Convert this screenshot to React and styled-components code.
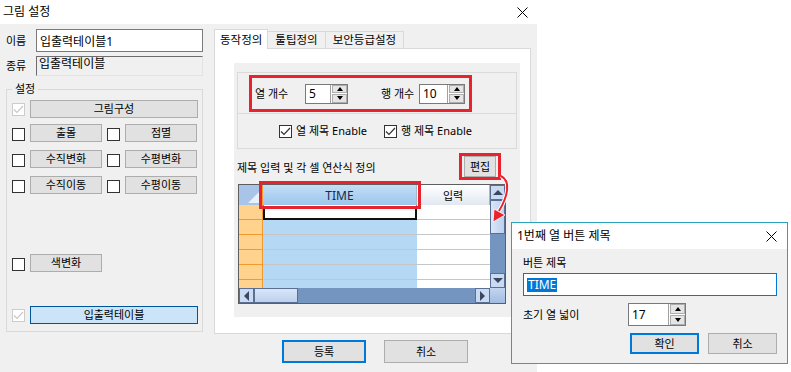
import React from 'react'
import styled, { createGlobalStyle } from 'styled-components'

const GlobalStyle = createGlobalStyle`
  html, body { margin: 0; padding: 0; background: #fff; }
  body {
    font-family: "Noto Sans", "Noto Sans CJK KR", sans-serif;
    font-size: 11px;
    color: #000;
  }
  * { box-sizing: border-box; }
`

const Screen = styled.div`
  position: relative;
  width: 791px;
  height: 372px;
  overflow: hidden;
  background: #fff;
`

const Window = styled.div`
  width: 537px;
  height: 372px;
  background: #f0f0f0;
  display: flex;
  flex-direction: column;
`

const TitleBar = styled.div`
  height: ${p => p.$h || 24}px;
  flex: none;
  background: #fff;
  display: flex;
  align-items: center;
  justify-content: space-between;
  padding: 0 ${p => p.$pr || 9}px 0 ${p => p.$pl || 3}px;
  font-size: 12px;
  line-height: 14px;
`

const Body = styled.div`
  display: flex;
  gap: 11px;
  padding: 5px 6px 0;
`

const LeftCol = styled.div`
  width: 197px;
  display: flex;
  flex-direction: column;
`

const FieldRow = styled.div`
  display: flex;
  align-items: center;
  margin-top: ${p => p.$mt || 0}px;
`

const FieldLabel = styled.span`
  width: 30px;
  line-height: 14px;
`

const NameInput = styled.div`
  width: 167px;
  height: 23px;
  background: #fff;
  border: 1px solid #7a7a7a;
  padding: 0 3px;
  display: flex;
  align-items: center;
  font-size: 12px;
`

const KindInput = styled.div`
  width: 167px;
  height: 20px;
  background: #f0f0f0;
  border: 1px solid #e3e3e3;
  border-top-color: #6d6d6d;
  border-left-color: #6d6d6d;
  padding: 0 2px;
  font-size: 12px;
  line-height: 14px;
`

const Group = styled.fieldset`
  margin: 6px 0 0;
  padding: 4px 5px 0;
  height: 250px;
  border: 1px solid #d9d9d9;
  min-width: 0;
`

const Legend = styled.legend`
  padding: 0 3px;
  line-height: 14px;
  margin-left: 0;
`

const ToolRow = styled.div`
  display: grid;
  grid-template-columns: ${p => (p.$pair ? '13px 72px 13px 72px' : '13px 168px')};
  column-gap: 5px;
  align-items: center;
  height: 18px;
  margin-top: ${p => p.$mt || 0}px;
`

const CheckBox = styled.span`
  display: inline-flex;
  align-items: center;
  justify-content: center;
  width: 13px;
  height: 13px;
  flex: none;
  background: #fff;
  border: 1px solid ${p => (p.$disabled ? '#cccccc' : '#333')};
  margin-top: ${p => p.$mt || 0}px;
`

const Btn = styled.button`
  font: inherit;
  font-size: 11px;
  color: #000;
  height: ${p => p.$h || 18}px;
  width: ${p => (p.$w ? p.$w + 'px' : '100%')};
  padding: 0;
  line-height: 14px;
  background: ${p => (p.$active ? '#cce4f7' : '#e1e1e1')};
  border: ${p => (p.$default ? '2px solid #0078d7' : p.$active ? '1px solid #005499' : '1px solid #adadad')};
  display: flex;
  align-items: center;
  justify-content: center;
`

const RightCol = styled.div`
  width: 317px;
  display: flex;
  flex-direction: column;
`

const TabStrip = styled.div`
  display: flex;
  align-items: flex-end;
  height: 20px;
  margin-bottom: -1px;
  position: relative;
  z-index: 1;
`

const Tab = styled.div`
  height: ${p => (p.$active ? 20 : 18)}px;
  padding: 0 ${p => (p.$active ? 5 : 7)}px;
  background: ${p => (p.$active ? '#fff' : '#f0f0f0')};
  border: 1px solid #d9d9d9;
  border-bottom: ${p => (p.$active ? 'none' : '1px solid #d9d9d9')};
  border-left: ${p => (p.$first ? '1px solid #d9d9d9' : 'none')};
  display: flex;
  align-items: center;
  font-size: 11.5px;
  line-height: 14px;
`

const Pane = styled.div`
  height: 286px;
  background: #fff;
  border: 1px solid #d9d9d9;
  padding: 14px 10px 16px 19px;
`

const Inner = styled.div`
  height: 100%;
  background: #f0f0f0;
  padding: 9px 3px 0;
  display: flex;
  flex-direction: column;
`

const SubBox = styled.div`
  border: 1px solid #dadada;
  display: flex;
  flex-direction: column;
`

const CountSection = styled.div`
  height: 41px;
  border-bottom: 1px solid #dadada;
`

const RedFrame = styled.div`
  border: 3px solid #e8232d;
  margin: ${p => p.$m || 0};
  width: ${p => (p.$w ? p.$w + 'px' : 'auto')};
  height: ${p => (p.$h ? p.$h + 'px' : 'auto')};
  display: flex;
  align-items: center;
  padding: ${p => p.$pad || 0};
`

const CountLabel = styled.span`
  width: ${p => p.$w}px;
  line-height: 14px;
`

const SpinBox = styled.div`
  display: flex;
  width: ${p => p.$w}px;
  height: ${p => p.$h}px;
  background: #fff;
  border: 1px solid #7a7a7a;
  margin-right: ${p => p.$mr || 0}px;
`

const SpinValue = styled.div`
  flex: 1;
  display: flex;
  align-items: center;
  padding-left: 3px;
  font-size: 12px;
`

const SpinButtons = styled.div`
  width: 17px;
  display: flex;
  flex-direction: column;
  gap: 1px;
  padding: 0 0 0 1px;
  background: #fff;
  border-left: 1px solid #a0a0a0;
`

const SpinBtn = styled.div`
  flex: 1;
  background: #e5e5e5;
  border: 1px solid #adadad;
  display: flex;
  align-items: center;
  justify-content: center;
`

const Tri = styled.span`
  width: 0;
  height: 0;
  border-left: 3.5px solid transparent;
  border-right: 3.5px solid transparent;
  ${p => (p.$up ? 'border-bottom: 4px solid #000;' : 'border-top: 4px solid #000;')}
`

const EnableSection = styled.div`
  height: 34px;
  display: flex;
  align-items: center;
  padding-left: 41px;
`

const CheckLabel = styled.label`
  display: flex;
  align-items: center;
  gap: 4px;
  line-height: 14px;
  margin-right: ${p => p.$mr || 0}px;
`

const LabelRow = styled.div`
  height: 35px;
  display: flex;
  align-items: center;
  justify-content: space-between;
  padding-right: 16px;
`

const Grid = styled.div`
  display: grid;
  grid-template-columns: 24px 154px 73px 15px;
  grid-template-rows: 20px 83px 15px;
  width: 268px;
  margin-left: 1px;
  border: 1px solid #5e5e5e;
  background: #7395c0;
`

const CornerCell = styled.div`
  background: #a9c4e9;
  border-right: 1px solid #f29a2e;
  position: relative;
  &::after {
    content: '';
    position: absolute;
    right: 2px;
    bottom: 2px;
    border-left: 12px solid transparent;
    border-bottom: 12px solid #e8f0fa;
  }
`

const HeadCell = styled.div`
  display: flex;
  align-items: center;
  justify-content: center;
  background: ${p => (p.$blue ? 'linear-gradient(#c3def6, #9bc6ec)' : 'linear-gradient(#ffffff, #e2e8f1)')};
  border-right: 1px solid #a9b6c8;
  color: ${p => (p.$blue ? '#142a4c' : '#000')};
  font-size: ${p => (p.$blue ? 12 : 11)}px;
  position: relative;
  ${p => p.$mark && 'outline: 3px solid #e8232d; outline-offset: 1px; z-index: 2;'}
`

const Column = styled.div`
  display: flex;
  flex-direction: column;
  overflow: hidden;
  background: ${p => p.$bg};
  ${p => p.$orange && 'border-right: 1px solid #f29a2e;'}
`

const Cell = styled.div`
  height: 15px;
  flex: none;
  border-bottom: 1px solid ${p => (p.$orange ? '#f29a2e' : '#c6c6c6')};
  ${p => p.$edit && 'background: #fff; border: 2px solid #111; border-top-color: #fff;'}
`

const VScroll = styled.div`
  grid-row: span 2;
  display: flex;
  flex-direction: column;
  background: #7395c0;
`

const HScroll = styled.div`
  grid-column: span 3;
  display: flex;
  background: #7395c0;
`

const ScrollBtn = styled.div`
  width: ${p => p.$w || 15}px;
  height: ${p => p.$h || 15}px;
  flex: none;
  background: #c9daf1;
  border: 1px solid #5b6f93;
  display: flex;
  align-items: center;
  justify-content: center;
  margin-top: ${p => (p.$push ? 'auto' : 0)};
  margin-left: ${p => (p.$pushx ? 'auto' : 0)};
`

const Thumb = styled.div`
  flex: none;
  width: ${p => p.$w || 15}px;
  height: ${p => p.$h || 15}px;
  background: linear-gradient(${p => (p.$hor ? '#d9e6f7, #bcd0ed' : '90deg, #d9e6f7, #bcd0ed')});
  border: 1px solid #5b6f93;
`

const ScrollCorner = styled.div`
  background: linear-gradient(#c3d5ef, #a2bce2);
`

const Arrow = styled.span`
  width: 0;
  height: 0;
  ${p =>
    p.$dir === 'up'
      ? 'border-left: 5px solid transparent; border-right: 5px solid transparent; border-bottom: 5px solid #3a4664;'
      : p.$dir === 'down'
      ? 'border-left: 5px solid transparent; border-right: 5px solid transparent; border-top: 5px solid #3a4664;'
      : p.$dir === 'left'
      ? 'border-top: 5px solid transparent; border-bottom: 5px solid transparent; border-right: 5px solid #3a4664;'
      : 'border-top: 5px solid transparent; border-bottom: 5px solid transparent; border-left: 5px solid #3a4664;'}
`

const Footer = styled.div`
  display: flex;
  gap: 18px;
  margin-top: 6px;
  padding-left: 68px;
`

const Dialog = styled.div`
  position: absolute;
  left: 511px;
  top: 222px;
  width: 277px;
  height: 142px;
  background: #f0f0f0;
  border: 1px solid #2ba3bd;
  display: flex;
  flex-direction: column;
  z-index: 5;
`

const DialogBody = styled.div`
  padding: 7px 10px 0 11px;
  display: flex;
  flex-direction: column;
`

const DlgLabel = styled.div`
  line-height: 14px;
`

const TextField = styled.div`
  margin-top: 3px;
  height: 23px;
  background: #fff;
  border: 1px solid #0078d7;
  display: flex;
  align-items: center;
  padding-left: 3px;
`

const Selected = styled.span`
  background: #0078d7;
  color: #fff;
  font-size: 12px;
  line-height: 14px;
  padding: 0 1px;
`

const WidthRow = styled.div`
  display: flex;
  align-items: center;
  margin-top: 7px;
`

const DlgButtons = styled.div`
  display: flex;
  justify-content: flex-end;
  gap: 9px;
  margin-top: 7px;
`

const Overlay = styled.svg`
  position: absolute;
  left: 0;
  top: 0;
  pointer-events: none;
  z-index: 10;
`

const CloseIcon = () => (
  <svg width="11" height="11" viewBox="0 0 11 11">
    <path d="M0.5 0.5 L10.5 10.5 M10.5 0.5 L0.5 10.5" stroke="#000" strokeWidth="1" fill="none" />
  </svg>
)

const Check = ({ checked, disabled, mt }) => (
  <CheckBox $disabled={disabled} $mt={mt}>
    {checked && (
      <svg width="11" height="11" viewBox="0 0 11 11">
        <polyline points="1,5.5 4,8.5 10,2" fill="none" stroke={disabled ? '#c8c8c8' : '#333'} strokeWidth="1.2" />
      </svg>
    )}
  </CheckBox>
)

const Spin = ({ value, w, h, mr }) => (
  <SpinBox $w={w} $h={h} $mr={mr}>
    <SpinValue>{value}</SpinValue>
    <SpinButtons>
      <SpinBtn><Tri $up /></SpinBtn>
      <SpinBtn><Tri /></SpinBtn>
    </SpinButtons>
  </SpinBox>
)

const pairs = [
  ['출몰', '점멸'],
  ['수직변화', '수평변화'],
  ['수직이동', '수평이동'],
]

const rowCount = 6

export default function App() {
  return (
    <Screen>
      <GlobalStyle />
      <Window>
        <TitleBar>
          <span>그림 설정</span>
          <CloseIcon />
        </TitleBar>
        <Body>
          <LeftCol>
            <FieldRow>
              <FieldLabel>이름</FieldLabel>
              <NameInput>입출력테이블1</NameInput>
            </FieldRow>
            <FieldRow $mt={4}>
              <FieldLabel>종류</FieldLabel>
              <KindInput>입출력테이블</KindInput>
            </FieldRow>
            <Group>
              <Legend>설정</Legend>
              <ToolRow>
                <Check checked disabled />
                <Btn>그림구성</Btn>
              </ToolRow>
              {pairs.map(([a, b], i) => (
                <ToolRow $pair key={a} $mt={i === 0 ? 6 : 8}>
                  <Check mt={3} />
                  <Btn>{a}</Btn>
                  <Check mt={3} />
                  <Btn>{b}</Btn>
                </ToolRow>
              ))}
              <ToolRow $pair $mt={60}>
                <Check mt={3} />
                <Btn>색변화</Btn>
              </ToolRow>
              <ToolRow $mt={34}>
                <Check checked disabled />
                <Btn $active>입출력테이블</Btn>
              </ToolRow>
            </Group>
          </LeftCol>

          <RightCol>
            <TabStrip>
              <Tab $active $first>동작정의</Tab>
              <Tab>툴팁정의</Tab>
              <Tab>보안등급설정</Tab>
            </TabStrip>
            <Pane>
              <Inner>
                <SubBox>
                  <CountSection>
                    <RedFrame $m="2px 0 0 11px" $w={223} $h={37} $pad="0 0 0 3px">
                      <CountLabel $w={50}>열 개수</CountLabel>
                      <Spin value="5" w={43} h={20} mr={33} />
                      <CountLabel $w={38}>행 개수</CountLabel>
                      <Spin value="10" w={46} h={20} />
                    </RedFrame>
                  </CountSection>
                  <EnableSection>
                    <CheckLabel $mr={17}>
                      <Check checked />
                      <span>열 제목 Enable</span>
                    </CheckLabel>
                    <CheckLabel>
                      <Check checked />
                      <span>행 제목 Enable</span>
                    </CheckLabel>
                  </EnableSection>
                </SubBox>
                <LabelRow>
                  <span>제목 입력 및 각 셀 연산식 정의</span>
                  <RedFrame $pad="0 2px">
                    <Btn $w={32} $h={21}>편집</Btn>
                  </RedFrame>
                </LabelRow>
                <Grid>
                  <CornerCell />
                  <HeadCell $blue $mark>TIME</HeadCell>
                  <HeadCell>입력</HeadCell>
                  <VScroll>
                    <ScrollBtn><Arrow $dir="up" /></ScrollBtn>
                    <Thumb $h={34} />
                    <ScrollBtn $push><Arrow $dir="down" /></ScrollBtn>
                  </VScroll>
                  <Column $bg="#ffd28e" $orange>
                    {Array.from({ length: rowCount }, (_, i) => (
                      <Cell key={i} $orange />
                    ))}
                  </Column>
                  <Column $bg="#b5d8f4">
                    {Array.from({ length: rowCount }, (_, i) => (
                      <Cell key={i} $edit={i === 0} />
                    ))}
                  </Column>
                  <Column $bg="#fff">
                    {Array.from({ length: rowCount }, (_, i) => (
                      <Cell key={i} />
                    ))}
                  </Column>
                  <HScroll>
                    <ScrollBtn><Arrow $dir="left" /></ScrollBtn>
                    <Thumb $hor $w={44} />
                    <ScrollBtn $pushx><Arrow $dir="right" /></ScrollBtn>
                  </HScroll>
                  <ScrollCorner />
                </Grid>
              </Inner>
            </Pane>
            <Footer>
              <Btn $default $w={84} $h={23}>등록</Btn>
              <Btn $w={84} $h={23}>취소</Btn>
            </Footer>
          </RightCol>
        </Body>
      </Window>

      <Dialog>
        <TitleBar $h={26} $pl={5} $pr={10}>
          <span>1번째 열 버튼 제목</span>
          <CloseIcon />
        </TitleBar>
        <DialogBody>
          <DlgLabel>버튼 제목</DlgLabel>
          <TextField>
            <Selected>TIME</Selected>
          </TextField>
          <WidthRow>
            <CountLabel $w={105}>초기 열 넓이</CountLabel>
            <Spin value="17" w={58} h={23} />
          </WidthRow>
          <DlgButtons>
            <Btn $default $w={69} $h={21}>확인</Btn>
            <Btn $w={69} $h={21}>취소</Btn>
          </DlgButtons>
        </DialogBody>
      </Dialog>

      <Overlay width="791" height="372">
        <path d="M501 176 C511 181, 508 196, 499 211" fill="none" stroke="#fff" strokeWidth="4" />
        <path d="M501 176 C511 181, 508 196, 499 211" fill="none" stroke="#e8232d" strokeWidth="2" />
        <polygon points="493,222 494,209 505,215" fill="#e8232d" stroke="#fff" strokeWidth="0.8" />
      </Overlay>
    </Screen>
  )
}
